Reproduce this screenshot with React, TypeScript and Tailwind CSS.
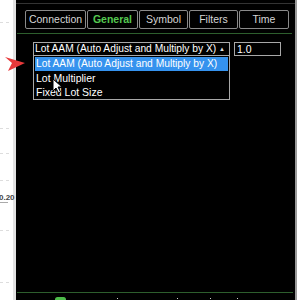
import React from "react";

const font = { fontFamily: '"Liberation Sans", Arial, sans-serif' };

function Tab({ label, w, active }: { label: string; w: string; active?: boolean }) {
  return (
    <div
      className={`${w} h-[19px] border border-[#8a8a8a] rounded-[2px] flex items-center justify-center text-[10.5px] ${
        active ? "text-[#55c951] font-bold" : "text-[#d6d6d6]"
      }`}
    >
      {label}
    </div>
  );
}

export default function App() {
  return (
    <div className="w-[300px] h-[300px] flex bg-white overflow-hidden relative" style={font}>
      {/* left chart strip */}
      <div className="w-[13px] h-full relative bg-white">
        <div className="absolute left-0 top-[22px] w-[9px] border-t border-dashed border-[#dddddd]" />
        <div className="absolute left-0 top-[128px] w-[9px] border-t border-dashed border-[#dddddd]" />
        <div className="absolute left-0 top-[153px] w-[9px] border-t border-dashed border-[#dddddd]" />
        <div className="absolute left-0 top-[180px] w-[9px] border-t border-dashed border-[#dddddd]" />
        <div className="absolute left-0 top-[230px] w-[9px] border-t border-dashed border-[#dddddd]" />
        <div className="absolute left-0 top-[282px] w-[9px] border-t border-dashed border-[#dddddd]" />
        <div className="absolute left-[-1px] top-[193px] text-[8px] leading-[9px] text-[#444] font-bold whitespace-nowrap">
          0.20
        </div>
        <div className="absolute left-0 top-[202px] w-[8px] h-px bg-[#aaa]" />
      </div>
      <div className="w-[3px] h-full bg-[#e2e2e2]" />

      {/* black panel */}
      <div className="w-[279px] h-full bg-black flex flex-col relative">
        <div className="h-[3px]" />
        <div className="h-px bg-[#333]" />
        <div className="mt-[6px] ml-[9px] flex gap-[1px]">
          <Tab label="Connection" w="w-[61px]" />
          <Tab label="General" w="w-[51px]" active />
          <Tab label="Symbol" w="w-[49px]" />
          <Tab label="Filters" w="w-[49px]" />
          <Tab label="Time" w="w-[50px]" />
        </div>
        <div className="mt-[4px] ml-[1px] mr-[3px] h-px bg-[#2d5e2d]" />

        <div className="mt-[8px] ml-[17px] flex gap-[4px] relative">
          <div className="w-[197px] h-[14px] border border-[#a8a8a8] flex items-center pl-[1px] pr-[4px] text-[10.25px] text-white leading-none">
            <span className="flex-1 whitespace-nowrap">Lot AAM (Auto Adjust and Multiply by X)</span>
            <span className="text-[6px] text-[#ddd]">▲</span>
          </div>
          <div className="w-[47px] h-[14px] border border-[#a8a8a8] flex items-center pl-[2px] text-[10.5px] text-white leading-none">
            1.0
          </div>

          {/* dropdown popup */}
          <div className="absolute left-0 top-[13px] w-[197px] h-[45px] border border-[#a8a8a8] bg-black pt-[1px] px-[1px] flex flex-col text-[10.5px] text-white leading-none">
            <div className="h-[14px] bg-[#3592ee] flex items-center pl-[1px] whitespace-nowrap text-[10.25px]">
              Lot AAM (Auto Adjust and Multiply by X)
            </div>
            <div className="h-[14px] flex items-center pl-[1px]">Lot Multiplier</div>
            <div className="h-[14px] flex items-center pl-[1px]">Fixed Lot Size</div>
          </div>
        </div>

        <div className="flex-1" />
        <div className="ml-[1px] mr-[2px] h-px bg-[#2d5e2d]" />
        <div className="h-[7px] relative">
          <div className="absolute left-[39px] top-[4px] w-[11px] h-[5px] rounded-[3px] bg-[#4dbb4a]" />
          <div className="absolute left-[101px] top-[5px] w-px h-px bg-[#ccc]" />
          <div className="absolute left-[161px] top-[5px] w-px h-px bg-[#ccc]" />
          <div className="absolute left-[194px] top-[5px] w-px h-px bg-[#ccc]" />
          <div className="absolute left-[221px] top-[5px] w-px h-px bg-[#ccc]" />
        </div>
      </div>

      <div className="w-[2px] h-full bg-[#9a9a9a]" />
      <div className="flex-1 h-full bg-white" />

      {/* red pointer arrow */}
      <svg className="absolute left-[4px] top-[56px]" width="22" height="16" viewBox="0 0 22 16">
        <polygon points="1,1 21,7 4,15 8,7" fill="#e8393a" />
      </svg>

      {/* mouse cursor */}
      <svg className="absolute left-[52px] top-[78px]" width="12" height="16" viewBox="0 0 12 16">
        <path
          d="M1 1 L1 13 L4 10 L6.5 15 L8.5 14 L6 9 L10 9 Z"
          fill="white"
          stroke="black"
          strokeWidth="1"
          strokeLinejoin="round"
        />
      </svg>
    </div>
  );
}
